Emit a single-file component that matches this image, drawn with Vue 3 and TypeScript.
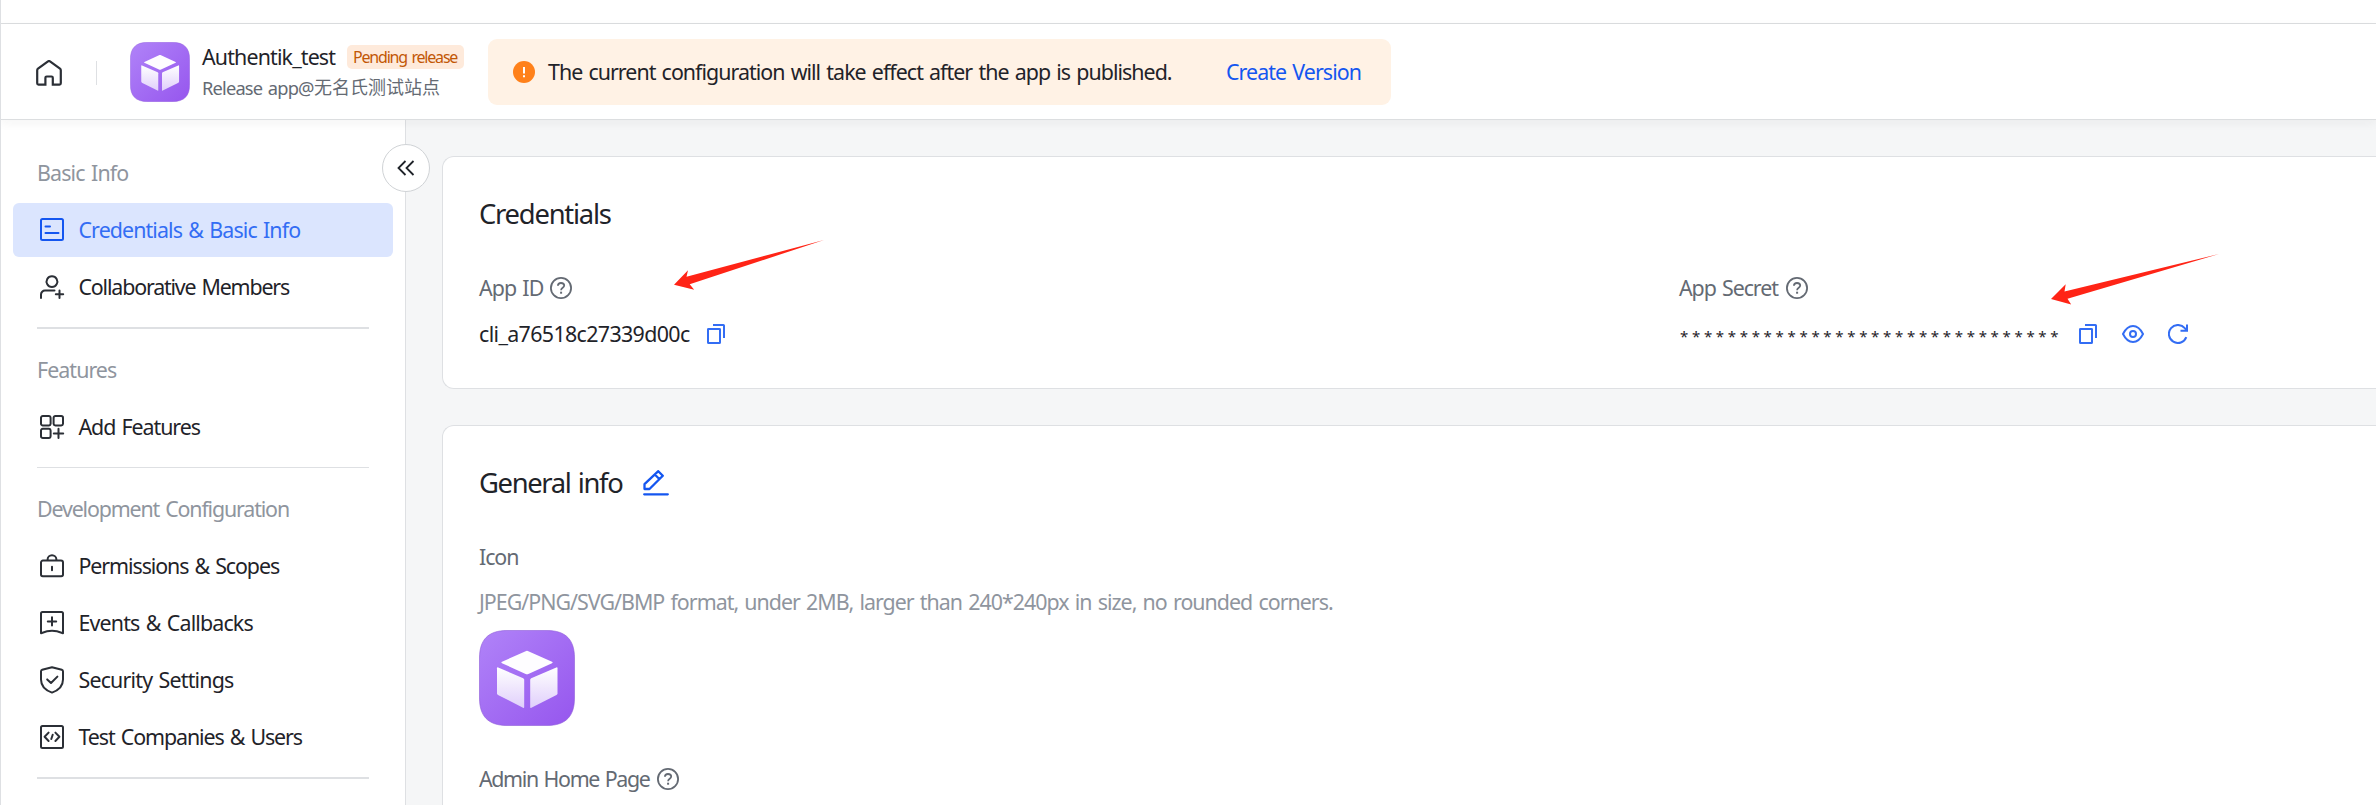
<script setup lang="ts">
interface NavItem {
  label: string
  icon: string
  track: number
  active?: boolean
}
interface NavGroup {
  title: string
  track: number
  items: NavItem[]
  thick: boolean
}

const groups: NavGroup[] = [
  {
    title: 'Basic Info',
    track: -0.85,
    thick: true,
    items: [
      { label: 'Credentials & Basic Info', icon: 'card', track: -0.9, active: true },
      { label: 'Collaborative Members', icon: 'member', track: -1.17 },
    ],
  },
  {
    title: 'Features',
    track: -0.94,
    thick: false,
    items: [{ label: 'Add Features', icon: 'apps', track: -1.05 }],
  },
  {
    title: 'Development Configuration',
    track: -1.15,
    thick: true,
    items: [
      { label: 'Permissions & Scopes', icon: 'lock', track: -1.08 },
      { label: 'Events & Callbacks', icon: 'event', track: -0.85 },
      { label: 'Security Settings', icon: 'shield', track: -0.82 },
      { label: 'Test Companies & Users', icon: 'code', track: -1.08 },
    ],
  },
]

// Outline icons on a 24x24 grid.
const icons: Record<string, string> = {
  card: 'M2.5 1H21.5A1.5 1.5 0 0 1 23 2.5V20.5A1.5 1.5 0 0 1 21.5 22H2.5A1.5 1.5 0 0 1 1 20.5V2.5A1.5 1.5 0 0 1 2.5 1ZM5.5 8.5H10M5.5 15H18.5',
  member: 'M12 1.2A5.4 5.4 0 1 1 11.9 1.2ZM1 23V19.5A4 4 0 0 1 5 15.5H14.5M19.5 15.5V23M15.8 19.3H23.2',
  apps: 'M3 1H9A1.8 1.8 0 0 1 10.6 2.8V8.8A1.8 1.8 0 0 1 9 10.4H3A1.8 1.8 0 0 1 1 8.8V2.8A1.8 1.8 0 0 1 3 1ZM15.4 1H21.2A1.8 1.8 0 0 1 23 2.8V8.8A1.8 1.8 0 0 1 21.2 10.4H15.4A1.8 1.8 0 0 1 13.6 8.8V2.8A1.8 1.8 0 0 1 15.4 1ZM3 13.8H9A1.8 1.8 0 0 1 10.6 15.6V21.2A1.8 1.8 0 0 1 9 23H3A1.8 1.8 0 0 1 1 21.2V15.6A1.8 1.8 0 0 1 3 13.8ZM18.5 13.8V23M13.8 18.4H23.2',
  lock: 'M3 6.5H21A2 2 0 0 1 23 8.5V20.5A1.8 1.8 0 0 1 21.2 22.3H2.8A1.8 1.8 0 0 1 1 20.5V8.5A2 2 0 0 1 3 6.5ZM7.6 6.2V5.5A4.4 4.2 0 0 1 16.4 5.5V6.2M12 12.7V16.2',
  event: 'M2.5 1H21.5A1.5 1.5 0 0 1 23 2.5V22.2C17 20 15 19.8 12 19.8S7 20 1 22.2V2.5A1.5 1.5 0 0 1 2.5 1ZM12 6.3V14.5M7.8 10.4H16.2',
  shield: 'M12 -0.8L21.8 1.8A1.6 1.6 0 0 1 23 3.4V11.5C23 18 18 22.5 12 24.6C6 22.5 1 18 1 11.5V3.4A1.6 1.6 0 0 1 2.2 1.8ZM7.2 11.4L11 15L17.4 8.6',
  code: 'M2.5 1H21.5A1.5 1.5 0 0 1 23 2.5V21.5A1.5 1.5 0 0 1 21.5 23H2.5A1.5 1.5 0 0 1 1 21.5V2.5A1.5 1.5 0 0 1 2.5 1ZM8.6 7.6L4.6 11.8L8.6 16M15.4 7.6L19.4 11.8L15.4 16M12.7 9.8L11.3 14',
}

const secret = '*'.repeat(32)
</script>

<template>
  <div class="page">
    <svg class="defs" width="0" height="0">
      <defs>
        <linearGradient id="tile" x1="0" y1="0" x2="1" y2="1">
          <stop offset="0" stop-color="#b083f8" />
          <stop offset="1" stop-color="#9656ee" />
        </linearGradient>
        <linearGradient id="face" x1="0" y1="0" x2="0" y2="1">
          <stop offset="0" stop-color="#fff" />
          <stop offset="1" stop-color="#e0cffb" />
        </linearGradient>
        <symbol id="appicon" viewBox="0 0 96 96">
          <path d="M28 .5H68C87 .5 95.500 10 95.500 28V68C95.500 86 87 95.500 68 95.500H28C9 95.500 .5 86 .5 68V28C.5 10 9 .5 28 .5Z" fill="url(#tile)" stroke="#8d5bd8" stroke-opacity=".6" />
          <path d="M47.200 20.900Q48 20.500 48.800 20.900L73 31.800Q74.300 32.500 73 33.200L48.800 44.200Q48 44.500 47.200 44.200L23 33.200Q21.700 32.500 23 31.800Z" fill="#fefdff" />
          <path d="M18 38.200Q18 37 19.200 37.500L44.200 48.300Q45.200 48.800 45.200 49.800V77Q45.200 78.300 44 77.700L19 65Q18 64.400 18 63.300Z" fill="url(#face)" />
          <path d="M78.500 38.200Q78.500 37 77.300 37.500L52.200 48.300Q51.200 48.800 51.200 49.800V77Q51.200 78.300 52.400 77.700L77.500 65Q78.500 64.400 78.500 63.300Z" fill="url(#face)" />
        </symbol>
        <symbol id="help" viewBox="0 0 22 22">
          <circle cx="11" cy="11" r="10.100" fill="none" stroke="currentColor" stroke-width="1.800" />
          <path d="M7.900 8.700C8 6.900 9.200 6 11 6C12.900 6 14.200 7 14.200 8.600C14.200 10.900 11.100 10.700 11.100 13.200" fill="none" stroke="currentColor" stroke-width="1.800" />
          <rect x="10.100" y="14.700" width="2" height="2" fill="currentColor" />
        </symbol>
        <symbol id="copy" viewBox="0 0 18 20">
          <path d="M1 5.500A.6.600 0 0 1 1.600 4.900H12.400A.6.600 0 0 1 13 5.500V18.400A.6.600 0 0 1 12.400 19H1.600A.6.600 0 0 1 1 18.400ZM6 1H16.400A.6.600 0 0 1 17 1.600V14" fill="none" stroke="currentColor" stroke-width="2" />
        </symbol>
      </defs>
    </svg>

    <div class="strip"></div>
    <header class="header">
      <svg class="home" viewBox="0 0 26 26">
        <path d="M1.200 10.200A2 2 0 0 1 2 8.700L12 1.400Q13 .7 14 1.400L24 8.700A2 2 0 0 1 24.800 10.200V23.300A1.300 1.300 0 0 1 23.500 24.600H16.800V17.800A1.300 1.300 0 0 0 15.500 16.500H10.700A1.300 1.300 0 0 0 9.400 17.800V24.600H2.500A1.300 1.300 0 0 1 1.200 23.300Z" />
      </svg>
      <i class="sep"></i>
      <svg class="logo"><use href="#appicon" /></svg>
      <div class="app">
        <div class="app-top">
          <span class="app-name">Authentik_test</span>
          <span class="tag">Pending release</span>
        </div>
        <div class="app-sub"><span class="latin">Release app@</span><span>无名氏测试站点</span></div>
      </div>
      <div class="banner">
        <svg class="warn" viewBox="0 0 22 22">
          <circle cx="11" cy="11" r="11" fill="#ff811a" />
          <path d="M10 6H12V12.500H10ZM10 14.200H12V16.200H10Z" fill="#fff" />
        </svg>
        <span class="msg">The current configuration will take effect after the app is published.</span>
        <a class="link">Create Version</a>
      </div>
    </header>

    <div class="body">
      <nav class="side">
        <section v-for="g in groups" :key="g.title" class="group" :class="{ thick: g.thick }">
          <div class="group-title" :style="{ letterSpacing: g.track + 'px' }">{{ g.title }}</div>
          <div v-for="n in g.items" :key="n.label" class="item" :class="{ active: n.active }">
            <svg class="nav-icon" viewBox="0 0 24 24"><path :d="icons[n.icon]" /></svg>
            <span class="nav-text" :style="{ letterSpacing: n.track + 'px' }">{{ n.label }}</span>
          </div>
        </section>
        <button class="collapse" type="button">
          <svg viewBox="0 0 18 16"><path d="M8.500 1L1.500 8L8.500 15M16.500 1L9.500 8L16.500 15" /></svg>
        </button>
      </nav>

      <main class="main">
        <section class="card cred">
          <h2 class="h-cred">Credentials</h2>
          <div class="cols">
            <div class="col">
              <div class="label"><span class="l-id">App ID</span><svg class="help"><use href="#help" /></svg></div>
              <div class="value"><span class="v-id">cli_a76518c27339d00c</span><svg class="copy"><use href="#copy" /></svg></div>
              <svg class="pointer first" viewBox="0 0 150 50">
                <path d="M0 44.700L14 30.300L12.500 36.700L150 0L15.700 44.300L20.200 49.800Z" />
              </svg>
            </div>
            <div class="col">
              <div class="label"><span class="l-secret">App Secret</span><svg class="help"><use href="#help" /></svg></div>
              <div class="value">
                <span class="stars">{{ secret }}</span>
                <svg class="copy"><use href="#copy" /></svg>
                <svg class="eye" viewBox="0 0 22 18">
                  <path d="M1 9C3.500 4 7 1 11 1S18.500 4 21 9C18.500 14 15 17 11 17S3.500 14 1 9Z" />
                  <circle cx="11" cy="9" r="3" />
                </svg>
                <svg class="refresh" viewBox="0 0 20 20">
                  <path d="M18.300 13.200A9 9 0 1 1 16.800 4.200L18.600 6.200M19 .5V6.700H12.500" />
                </svg>
              </div>
              <svg class="pointer second" viewBox="0 0 168 51">
                <path d="M0 45L14.700 30.300L13.500 37.500L168 0L16.500 44.800L20.200 50.500Z" />
              </svg>
            </div>
          </div>
        </section>

        <section class="card general">
          <h2 class="h-gen"><span>General info</span>
            <svg class="edit" viewBox="0 0 26 26">
              <path d="M1.500 14.200L15.300 1.200L19.800 5.700L6.500 19H1.500ZM11.800 4.500L16.300 9M1.200 24.300H24.800" />
            </svg>
          </h2>
          <div class="f-label">Icon</div>
          <div class="hint">JPEG/PNG/SVG/BMP format, under 2MB, larger than 240*240px in size, no rounded corners.</div>
          <svg class="bigicon"><use href="#appicon" /></svg>
          <div class="label admin"><span>Admin Home Page</span><svg class="help"><use href="#help" /></svg></div>
        </section>
      </main>
    </div>
  </div>
</template>

<style scoped>
.page {
  box-sizing: border-box;
  width: 2376px;
  height: 805px;
  overflow: hidden;
  display: flex;
  flex-direction: column;
  border-left: 1px solid #dee0e3;
  background: #fff;
  color: #1f2329;
  font-family: 'Noto Sans', 'Noto Sans CJK SC', sans-serif;
  font-size: 21.4px;
  word-spacing: 1.6px;
  white-space: nowrap;
}
.defs { position: absolute; }
.strip { height: 23px; flex: none; border-bottom: 1px solid #dcdee0; }
.header {
  position: relative;
  z-index: 2;
  flex: none;
  height: 95px;
  display: flex;
  align-items: center;
  background: #fff;
  border-bottom: 1px solid #dcdee0;
  box-shadow: 0 3px 10px rgba(31, 35, 41, 0.05);
}
.home { width: 26px; height: 26px; margin: 2px 0 0 35px; fill: none; stroke: #2b2f36; stroke-width: 2.2; }
.sep { width: 1px; height: 24px; margin: 3px 0 0 34px; background: #dee0e3; }
.logo { width: 60px; height: 60px; margin-left: 33px; }
.app { width: 286px; margin-left: 12px; }
.app-top { display: flex; align-items: center; height: 30px; }
.app-name { width: 145px; letter-spacing: -0.85px; }
.tag {
  box-sizing: border-box;
  width: 117px;
  height: 24px;
  line-height: 24px;
  padding-left: 6px;
  border-radius: 5px;
  background: #feeadb;
  color: #c25705;
  font-size: 16px;
  letter-spacing: -1.2px;
}
.app-sub { display: flex; height: 30px; line-height: 31px; font-size: 18px; color: #646a73; }
.latin { width: 112px; font-size: 18.3px; letter-spacing: -0.82px; }
.banner {
  box-sizing: border-box;
  width: 903px;
  height: 66px;
  display: flex;
  align-items: center;
  border-radius: 9px;
  background: #fff2e5;
  padding-left: 25px;
}
.warn { width: 22px; height: 22px; }
.msg { width: 678px; margin-left: 13px; letter-spacing: -0.97px; }
.link { color: #1456f0; letter-spacing: -0.94px; }

.body { flex: 1; display: flex; min-height: 0; }
.side {
  position: relative;
  box-sizing: border-box;
  width: 405px;
  flex: none;
  padding-top: 26px;
  border-right: 1px solid #dee0e3;
}
.group { margin-bottom: 14px; }
.group::after { content: ''; display: block; height: 1px; margin: 13px 36px 0; background: #dee0e3; }
.group.thick::after { height: 2px; }
.group-title { height: 54px; line-height: 54px; padding-left: 36px; color: #8f959e; }
.item {
  height: 54px;
  margin: 3px 12px 0;
  padding-left: 27px;
  display: flex;
  align-items: center;
  gap: 14.500px;
  border-radius: 6px;
}
.item.active { background: #dbe5fe; color: #336df4; }
.nav-icon { width: 24px; height: 24px; overflow: visible; fill: none; stroke: #2b2f36; stroke-width: 2; stroke-linecap: round; stroke-linejoin: round; }
.nav-text { line-height: 54px; height: 55px; }
.active .nav-icon { stroke: #1456f0; }
.collapse {
  position: absolute;
  top: 24px;
  right: -25px;
  width: 48px;
  height: 48px;
  padding: 0;
  display: flex;
  align-items: center;
  justify-content: center;
  border: 1px solid #d0d3d6;
  border-radius: 50%;
  background: #fff;
}
.collapse svg { width: 18px; height: 16px; fill: none; stroke: #1f2329; stroke-width: 1.800; }

.main { flex: 1; min-width: 0; padding: 36px 0 0 36px; background: #f5f6f7; }
.card {
  box-sizing: border-box;
  border: 1px solid #dee0e3;
  border-right: 0;
  border-radius: 12px 0 0 12px;
  background: #fff;
  padding-left: 36px;
}
.cred { height: 233px; padding-top: 36px; }
.general { height: 420px; margin-top: 36px; padding-top: 36px; }
h2 { margin: 0; height: 42px; line-height: 42px; font-size: 27.4px; font-weight: 400; display: flex; align-items: center; }
.h-cred { letter-spacing: -1.23px; }
.h-gen span { width: 164px; letter-spacing: -1.36px; }
.edit { width: 26px; height: 26px; fill: none; stroke: #1456f0; stroke-width: 2.300; stroke-linejoin: round; stroke-linecap: round; }
.cols { display: grid; grid-template-columns: 1200px 1fr; margin-top: 36px; }
.col { position: relative; }
.label { display: flex; align-items: center; height: 33px; color: #646a73; }
.help { width: 22px; height: 22px; }
.l-id { width: 71px; letter-spacing: -0.95px; }
.l-secret { width: 107px; letter-spacing: -1.05px; }
.value { display: flex; align-items: center; height: 33px; margin-top: 13px; }
.v-id { width: 228px; letter-spacing: -0.64px; }
.copy { width: 18px; height: 20px; color: #336df4; }
.stars { box-sizing: border-box; width: 400px; padding: 4px 0 0 1px; font-size: 15px; letter-spacing: 3.680px; }
.eye { width: 22px; height: 18px; margin-left: 25px; fill: none; stroke: #336df4; stroke-width: 2; }
.refresh { width: 20px; height: 20px; margin-left: 24px; fill: none; stroke: #336df4; stroke-width: 2; }
.pointer { position: absolute; fill: #ff2416; }
.first { left: 195px; top: -31px; width: 150px; height: 50px; }
.second { left: 372px; top: -17px; width: 168px; height: 51px; }
.f-label { height: 33px; line-height: 33px; margin-top: 36px; color: #646a73; letter-spacing: -1.1px; }
.hint { height: 33px; line-height: 33px; margin-top: 12px; color: #8f959e; letter-spacing: -0.985px; }
.bigicon { display: block; width: 96px; height: 96px; margin-top: 12px; }
.admin { margin-top: 36px; }
.admin span { width: 178px; letter-spacing: -1.36px; }
</style>
<style>
body { margin: 0; }
</style>
